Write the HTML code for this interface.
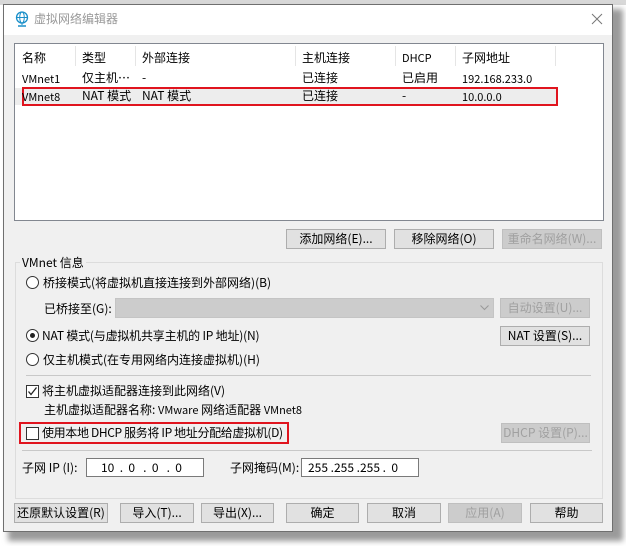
<!DOCTYPE html>
<html><head><meta charset="utf-8"><style>
*{margin:0;padding:0;box-sizing:border-box}
body{width:626px;height:546px;background:#fff;position:relative;overflow:hidden;font-family:"Microsoft YaHei","Noto Sans CJK SC","Liberation Sans",sans-serif;font-size:12px;color:#000}
.a{position:absolute;white-space:nowrap;line-height:14px}
.btn{position:absolute;background:#e1e1e1;border:1px solid #adadad;text-align:center;line-height:17px;font-size:12px}
.dis{color:#a0a0a0;background:#ccc;border-color:#bfbfbf}
.sep{position:absolute;height:1px;background:#c8c8c8}
.radio{position:absolute;width:13px;height:13px;border:1px solid #333;border-radius:50%;background:#fff}
.chk{position:absolute;width:13px;height:13px;border:1px solid #333;background:#fff}
.inp{position:absolute;background:#fff;border:1px solid #7a7a7a;height:19px;line-height:17px;font-size:12px}
</style></head><body>
<div style="position:absolute;left:0;top:0;width:626px;height:5px;background:#d8d8d8"></div>
<div style="position:absolute;left:8px;top:9px;width:615px;height:532px;background:#9a9a9a;filter:blur(3px)"></div>
<div style="position:absolute;left:3px;top:4px;width:610px;height:528px;background:#f0f0f0;border:1px solid #6f6f6f"></div>
<div style="position:absolute;left:4px;top:5px;width:608px;height:30px;background:#fff"></div>
<svg class="a" style="left:15px;top:11px" width="14" height="16" viewBox="0 0 14 16"><circle cx="7" cy="6.5" r="5.5" fill="none" stroke="#1a8fc9" stroke-width="1.3"/><ellipse cx="7" cy="6.5" rx="2.3" ry="5.5" fill="none" stroke="#1a8fc9"/><line x1="1.5" y1="6.5" x2="12.5" y2="6.5" stroke="#1a8fc9"/><line x1="7" y1="12" x2="7" y2="14" stroke="#1a8fc9"/><line x1="3" y1="15" x2="11" y2="15" stroke="#1a8fc9" stroke-width="1.5"/></svg>
<div class="a" style="left:34px;top:12px;color:#999;font-size:12px">虚拟网络编辑器</div>
<svg class="a" style="left:591px;top:13px" width="12" height="12"><path d="M1 1L11 11M11 1L1 11" stroke="#777" stroke-width="1"/></svg>

<div style="position:absolute;left:14px;top:43px;width:590px;height:178px;background:#fff;border:1px solid #828790"></div>
<div class="a" style="left:22px;top:51px">名称</div>
<div class="a" style="left:82px;top:51px">类型</div>
<div class="a" style="left:142px;top:51px">外部连接</div>
<div class="a" style="left:302px;top:51px">主机连接</div>
<div class="a" style="left:402px;top:51px;font-size:11px">DHCP</div>
<div class="a" style="left:462px;top:51px">子网地址</div>
<div class="sep" style="left:75px;top:46px;width:1px;height:20px;background:#e5e5e5"></div>
<div class="sep" style="left:135px;top:46px;width:1px;height:20px;background:#e5e5e5"></div>
<div class="sep" style="left:295px;top:46px;width:1px;height:20px;background:#e5e5e5"></div>
<div class="sep" style="left:395px;top:46px;width:1px;height:20px;background:#e5e5e5"></div>
<div class="sep" style="left:455px;top:46px;width:1px;height:20px;background:#e5e5e5"></div>
<div class="sep" style="left:555px;top:46px;width:1px;height:20px;background:#e5e5e5"></div>
<div class="a" style="left:22px;top:72px;font-size:11px">VMnet1</div>
<div class="a" style="left:82px;top:71px">仅主机…</div>
<div class="a" style="left:142px;top:71px">-</div>
<div class="a" style="left:302px;top:71px">已连接</div>
<div class="a" style="left:402px;top:71px">已启用</div>
<div class="a" style="left:462px;top:72px;font-size:11px">192.168.233.0</div>
<div style="position:absolute;left:15px;top:88px;width:541px;height:17px;background:#ededed"></div>
<div style="position:absolute;left:22px;top:87px;width:536px;height:19px;border:2px solid #e0141e"></div>
<div class="a" style="left:22px;top:90px;font-size:11px">VMnet8</div>
<div class="a" style="left:82px;top:89px">NAT 模式</div>
<div class="a" style="left:142px;top:89px">NAT 模式</div>
<div class="a" style="left:302px;top:89px">已连接</div>
<div class="a" style="left:402px;top:89px">-</div>
<div class="a" style="left:462px;top:90px;font-size:11px">10.0.0.0</div>

<div class="btn" style="left:286px;top:229px;width:100px;height:20px">添加网络(E)...</div>
<div class="btn" style="left:394px;top:229px;width:100px;height:20px">移除网络(O)</div>
<div class="btn dis" style="left:502px;top:229px;width:100px;height:20px">重命名网络(W)...</div>

<div style="position:absolute;left:15px;top:262px;width:588px;height:237px;border:1px solid #dcdcdc"></div>
<div class="a" style="left:20px;top:256px;background:#f0f0f0;padding:0 2px">VMnet 信息</div>
<div class="radio" style="left:26px;top:276px"></div>
<div class="a" style="left:43px;top:276px">桥接模式(将虚拟机直接连接到外部网络)(B)</div>
<div class="a" style="left:44px;top:302px">已桥接至(G):</div>
<div style="position:absolute;left:115px;top:298px;width:379px;height:20px;background:#cccccc;border:1px solid #c4c4c4"></div>
<svg class="a" style="left:480px;top:305px" width="9" height="6"><path d="M0.5 0.5L4.5 4.5L8.5 0.5" fill="none" stroke="#999"/></svg>
<div class="btn dis" style="left:500px;top:298px;width:90px;height:20px">自动设置(U)...</div>
<div class="radio" style="left:26px;top:329px"></div>
<div style="position:absolute;left:30px;top:333px;width:5px;height:5px;border-radius:50%;background:#222"></div>
<div class="a" style="left:42px;top:329px;letter-spacing:-0.2px">NAT 模式(与虚拟机共享主机的 IP 地址)(N)</div>
<div class="btn" style="left:500px;top:326px;width:90px;height:20px">NAT 设置(S)...</div>
<div class="radio" style="left:26px;top:353px"></div>
<div class="a" style="left:43px;top:353px">仅主机模式(在专用网络内连接虚拟机)(H)</div>
<div class="sep" style="left:26px;top:375px;width:565px"></div>
<div class="chk" style="left:26px;top:385px"></div>
<svg class="a" style="left:27px;top:386px" width="11" height="11"><path d="M1.5 5.5L4 8.5L9.5 1.5" fill="none" stroke="#222" stroke-width="1.3"/></svg>
<div class="a" style="left:42px;top:384px">将主机虚拟适配器连接到此网络(V)</div>
<div class="a" style="left:44px;top:403px">主机虚拟适配器名称: <span style="font-size:11px">VMware</span> 网络适配器 <span style="font-size:11px">VMnet8</span></div>
<div style="position:absolute;left:19px;top:422px;width:270px;height:22px;border:2px solid #e0141e"></div>
<div class="chk" style="left:26px;top:427px"></div>
<div class="a" style="left:42px;top:426px;letter-spacing:-0.35px">使用本地 DHCP 服务将 IP 地址分配给虚拟机(D)</div>
<div class="btn dis" style="left:501px;top:423px;width:89px;height:20px">DHCP 设置(P)...</div>
<div class="sep" style="left:22px;top:450px;width:570px"></div>
<div class="a" style="left:22px;top:461px">子网 IP (I):</div>
<div class="inp" style="left:86px;top:458px;width:118px;padding-left:14px">10 &nbsp;. &nbsp;0 &nbsp;&nbsp;. &nbsp;0 &nbsp;&nbsp;. &nbsp;0</div>
<div class="a" style="left:230px;top:461px">子网掩码(M):</div>
<div class="inp" style="left:301px;top:458px;width:118px;padding-left:6px">255 .255 .255 . &nbsp;0</div>

<div class="btn" style="left:14px;top:503px;width:94px;height:20px">还原默认设置(R)</div>
<div class="btn" style="left:120px;top:503px;width:74px;height:20px">导入(T)...</div>
<div class="btn" style="left:201px;top:503px;width:73px;height:20px">导出(X)...</div>
<div class="btn" style="left:286px;top:503px;width:73px;height:20px">确定</div>
<div class="btn" style="left:367px;top:503px;width:74px;height:20px">取消</div>
<div class="btn dis" style="left:448px;top:503px;width:74px;height:20px">应用(A)</div>
<div class="btn" style="left:530px;top:503px;width:73px;height:20px">帮助</div>
</body></html>
